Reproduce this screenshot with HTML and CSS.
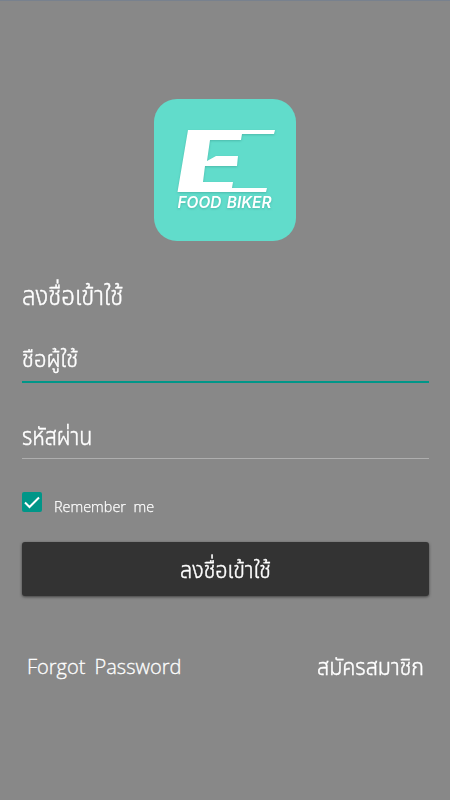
FILE: index.html
```html
<!DOCTYPE html>
<html lang="th">
<head>
<meta charset="utf-8">
<title>Food Biker</title>
<link rel="stylesheet" href="styles.css">
</head>
<body>
<main class="screen">
  <svg class="logo" viewBox="0 0 142 142" role="img">
    <rect width="142" height="142" rx="23" fill="#61dccb"/>
    <g class="mark">
      <path d="M34 31H121L120 35H88L87 41H56L53 62L62 57H84L83 67H51L49 83H79L78 89H113L112 93H23.500Z"/>
      <text class="brand" x="23.500" y="109" textLength="94" lengthAdjust="spacingAndGlyphs">FOOD BIKER</text>
    </g>
  </svg>
  <form class="login">
    <h1 class="title"><span>ลงชื่อเข้าใช้</span></h1>
    <div class="field active"><span class="username">ชือผู้ใช้</span></div>
    <div class="field password"><span>รหัสผ่าน</span></div>
    <div class="remember">
      <svg class="check" viewBox="0 0 20 20"><rect width="20" height="20" rx="2" fill="#009688"/><path d="M3 10.500L7.500 15L17 5.500" fill="none" stroke="#fff" stroke-width="2"/></svg>
      <span class="remember-label">Remember me</span>
    </div>
    <button class="submit" type="button"><span>ลงชื่อเข้าใช้</span></button>
    <div class="links"><span class="forgot">Forgot Password</span><span class="signup">สมัครสมาชิก</span></div>
  </form>
</main>
</body>
</html>
```
FILE: styles.css
```css
* { box-sizing: border-box; }
body { margin: 0; background: #888; color: #fff; font-family: "Open Sans", "Noto Sans", "Noto Sans Thai", sans-serif; font-weight: 300; }
.screen { height: 800px; padding: 97px 21px 0 22px; border-top: 1px solid #78818e; overflow: hidden; }
.logo { display: block; width: 142px; height: 142px; margin: 1px 0 0 132px; }
.mark { fill: #fff; filter: drop-shadow(0 1px 1px #3a9e9188); }
.brand { font: italic 600 15.5px Inter, sans-serif; word-spacing: 1.5px; }
.login span { display: inline-block; white-space: nowrap; transform-origin: left center; -webkit-text-stroke: .4px currentColor; }
.title { height: 36px; margin: 36px 0 0; font-size: 24px; font-weight: 300; line-height: 36px; }
.title span { transform: scaleY(1.08); }
.field { height: 47px; font-size: 22px; line-height: 45px; }
.login .username { transform: scale(1, 1.06); }
.active { border-bottom: 2px solid #009688; margin-top: 22px; height: 48px; }
.password { height: 46px; margin-top: 30px; border-bottom: 1px solid #aeaeae; }
.password span { transform: scale(.97, 1.1); }
.remember { display: flex; margin-top: 33px; height: 24px; }
.check { width: 20px; height: 20px; }
.login .remember-label { margin-left: 12px; font-size: 15px; line-height: 28px; word-spacing: 4px; transform: scaleX(.96); -webkit-text-stroke-width: .25px; }
.submit { display: block; width: 407px; height: 54px; margin-top: 26px; padding: 0 0 3px; border: 0; border-radius: 3px; background: #333; color: #fff; font: 300 22px/50px "Open Sans", "Noto Sans", "Noto Sans Thai", sans-serif; box-shadow: 0 1px 3px #0008; }
.submit span { margin-left: 2px; transform: scale(.98, 1.07); }
.links { display: flex; justify-content: space-between; height: 40px; margin: 51px 5px 0; font-size: 20px; line-height: 40px; }
.login .forgot { word-spacing: 4px; -webkit-text-stroke-width: .3px; }
.signup { font-size: 21.5px; line-height: 37px; transform: scaleY(1.09); }
```
